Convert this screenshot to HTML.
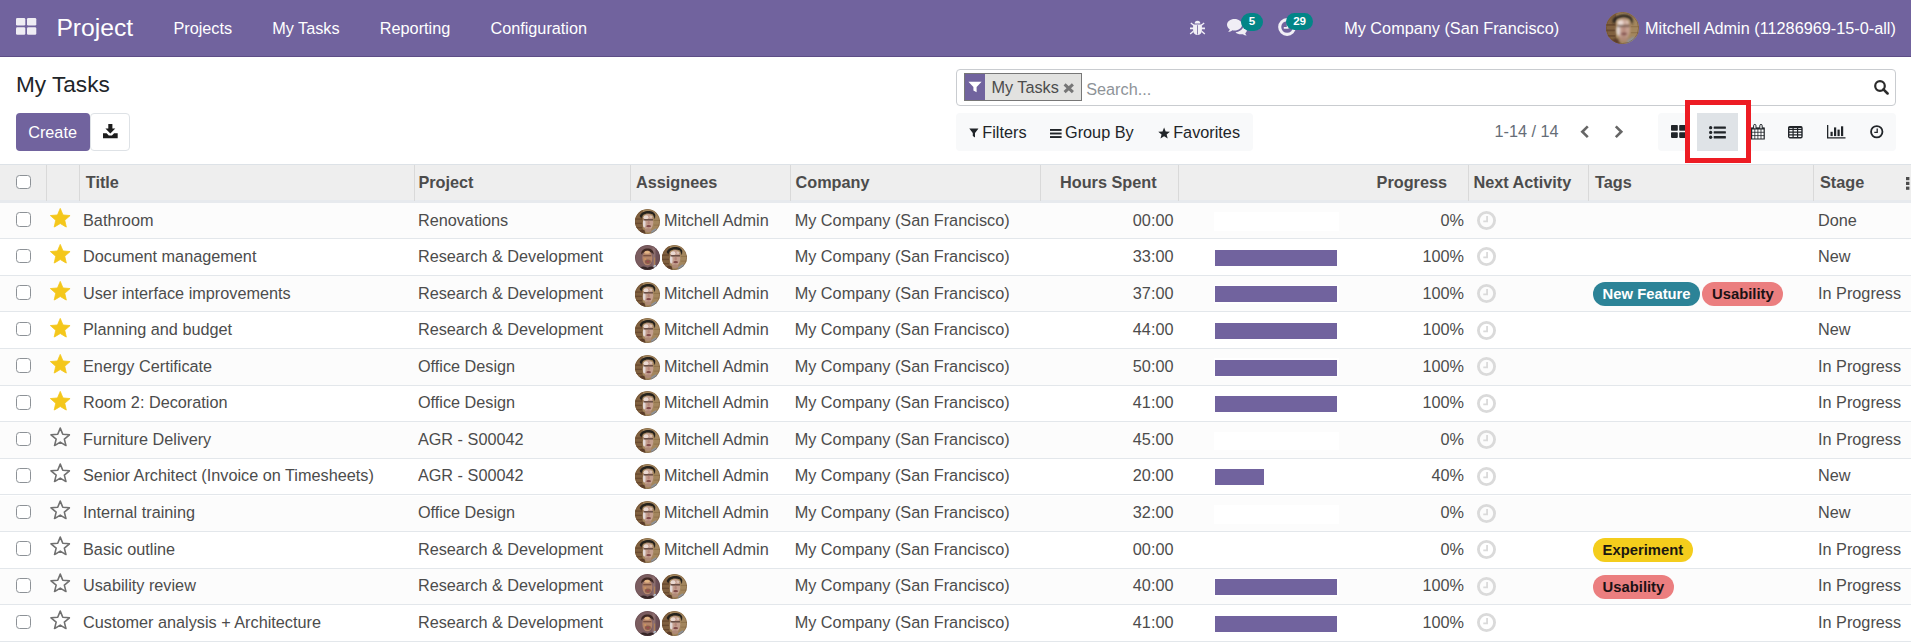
<!DOCTYPE html>
<html lang="en"><head><meta charset="utf-8"><title>Odoo - My Tasks</title>
<style>
*{box-sizing:border-box}
html,body{margin:0;padding:0}
body{width:1911px;height:644px;overflow:hidden;background:#fff;font-family:"Liberation Sans",Arial,sans-serif;font-size:16.25px;color:#4c4c4c;position:relative}
.t{position:absolute;white-space:nowrap;line-height:1}
svg{position:absolute;display:block;overflow:visible}
#nav{position:absolute;left:0;top:0;width:1911px;height:57px;background:#71639e;border-bottom:1px solid #5d4d86;color:#fff}
#nav .t{color:#fff}
.badge{position:absolute;background:#038587;color:#fff;font-weight:bold;font-size:11.6px;line-height:16.8px;height:17.8px;border-radius:9px;text-align:center}
#cp{position:absolute;left:0;top:57px;width:1911px;height:107px;background:#fff}
.btn-create{position:absolute;left:16.2px;top:113.2px;width:73.8px;height:37.6px;background:#71639e;border-radius:4px 0 0 4px;border-radius:4px;color:#fff}
.btn-dl{position:absolute;left:90.4px;top:113.2px;width:39.2px;height:37.6px;background:#fff;border:1px solid #dee2e6;border-radius:4px}
.search{position:absolute;left:956.2px;top:69.3px;width:939.4px;height:36.5px;border:1px solid #c9ccd0;border-radius:4px;background:#fff}
.facet{position:absolute;left:964px;top:73.2px;width:118px;height:27.6px;border:1px solid #777;background:#e2e2e0}
.facet i{position:absolute;left:0;top:0;width:19.6px;height:25.6px;background:#71639e;display:block}
.fbar{position:absolute;left:956.2px;top:113.1px;width:296.6px;height:37.7px;background:#f8f9fa;border-radius:4px}
.vbar{position:absolute;left:1658.2px;top:113.1px;width:237.4px;height:37.7px;background:#f8f9fa;border-radius:4px}
.vact{position:absolute;left:1697.1px;top:113.1px;width:41px;height:37.8px;background:#dfe3e7}
.redbox{position:absolute;left:1685px;top:100.2px;width:66px;height:62.7px;border:5px solid #ed1c24;background:#fff}
#thead{position:absolute;left:0;top:164px;width:1911px;height:39px;background:#eee;border-top:1.2px solid #dde2e7;border-bottom:3px solid #e7eaee;font-weight:bold}
#thead b{position:absolute;top:0;width:1px;height:35.5px;background:#d9d9d9;display:block}
#thead .t{top:9.2px}
.cb{position:absolute;left:16.3px;width:14.5px;height:14.5px;border:1px solid #8d9297;border-radius:3.5px;background:#fff;display:block}
.row{position:absolute;left:0;width:1911px;height:36.6px;border-bottom:1.1px solid #e3e7eb;background:#fff}
.rc{position:absolute;left:0;width:1911px;height:34px;line-height:34.7px}
.row.odd{background:#fcfcfc}
.row .cb{top:9.4px}
.row .c{position:absolute;top:0;white-space:nowrap}
.star{left:50.1px;top:5px;width:20.5px;height:19.5px}
.star.o{left:50.4px;top:4.3px}
.c-title{left:83px}
.c-proj{left:417.9px}
.c-ass{left:664px}
.c-comp{left:794.7px}
.c-hrs{right:737.5px}
.c-pct{right:447px}
.c-stage{left:1818px}
.av{top:6px;width:25px;height:25px}
.pb{position:absolute;left:1214px;top:9.4px;width:125px;height:18.7px;background:#fff;display:block}
.pf{position:absolute;left:1px;top:1.2px;height:16px;background:#71639e;display:block}
.clk{left:1477px;top:8.1px;width:19px;height:19px}
.tags{position:absolute;left:1593px;top:6px;height:24px;white-space:nowrap;display:block;line-height:24px}
.tag{display:inline-block;height:24px;line-height:24px;border-radius:12px;padding:0 9.6px;font-weight:bold;font-size:14.8px;margin-right:2.3px;vertical-align:top}
.t1{background:#2c8397;color:#fff}
.t2{background:#eb7e7f;color:#1b1215}
.t3{background:#f4cd1c;color:#1b1810}

</style></head>
<body>
<svg width="0" height="0" style="position:absolute">
<defs>
<symbol id="i-star" viewBox="0 0 20.5 19.5"><polygon points="10.25,0.38 13.04,6.94 20.14,7.57 14.77,12.25 16.36,19.19 10.25,15.53 4.14,19.19 5.73,12.25 0.36,7.57 7.46,6.94" fill="#f4c71b" stroke="#f4c71b" stroke-width="0.8" stroke-linejoin="round"/></symbol>
<symbol id="i-star-o" viewBox="0 0 20.5 19.5"><polygon points="10.25,1.08 12.78,7.30 19.48,7.78 14.34,12.11 15.95,18.63 10.25,15.08 4.55,18.63 6.16,12.11 1.02,7.78 7.72,7.30" fill="none" stroke="#707070" stroke-width="1.6" stroke-linejoin="round"/></symbol>
<symbol id="i-clk" viewBox="0 0 20 20"><circle cx="10" cy="10" r="8.5" fill="none" stroke="#dadada" stroke-width="3"/><path d="M10.6 5.2V10.9H6.6" fill="none" stroke="#dadada" stroke-width="1.9"/></symbol>
<symbol id="av-m" viewBox="0 0 32 32"><clipPath id="cm"><circle cx="16" cy="16" r="16"/></clipPath><filter id="bl" x="-20%" y="-20%" width="140%" height="140%"><feGaussianBlur stdDeviation="0.8"/></filter><g clip-path="url(#cm)"><rect width="32" height="32" fill="#a3865d"/><rect x="0" y="0" width="10" height="32" fill="#80603f"/><rect x="0" y="12" width="9" height="1.800" fill="#694a30"/><rect x="0" y="17.500" width="9" height="1.800" fill="#694a30"/><rect x="0" y="23" width="9" height="1.800" fill="#694a30"/><rect x="24" y="14" width="8" height="1.300" fill="#92744d"/><rect x="24" y="20" width="8" height="1.300" fill="#92744d"/><g filter="url(#bl)"><path d="M6 9C8 1 25 0 26 8L25.500 13L23 7C19 5 13 5 10 8L8 12Z" fill="#25211f"/><ellipse cx="16.800" cy="17" rx="6.600" ry="10.500" fill="#c49f8f"/><ellipse cx="14" cy="10.500" rx="3.200" ry="2.600" fill="#ead9d2"/><ellipse cx="20.500" cy="10" rx="2" ry="1.800" fill="#d9bfb3"/><ellipse cx="11.800" cy="18.500" rx="1.700" ry="5" fill="#e3d8d6"/><rect x="11" y="13" width="12" height="1.700" fill="#5a4239"/><ellipse cx="17.500" cy="17.500" rx="1.500" ry="2.400" fill="#b5867a"/><ellipse cx="17.500" cy="22" rx="3" ry="1.400" fill="#7f4a48"/><ellipse cx="17" cy="27" rx="4" ry="2.500" fill="#b08a78"/><path d="M20 33L21 28L26 25L31 26L33 33Z" fill="#8d939b"/><path d="M3 33C5 27 9 25 12 27L14 33Z" fill="#5b3d2c"/></g><circle cx="16" cy="16" r="15.600" fill="none" stroke="#6a4a30" stroke-width=".8" opacity=".6"/></g></symbol>
<symbol id="av-d" viewBox="0 0 32 32"><clipPath id="cd"><circle cx="16" cy="16" r="16"/></clipPath><g clip-path="url(#cd)"><rect width="32" height="32" fill="#7b5d60"/><rect x="22.500" y="0" width="3" height="32" fill="#8d6f70"/><rect x="24.500" y="16" width="1.300" height="10" fill="#b38452"/><rect x="27" y="0" width="5" height="32" fill="#6b4f56"/><g filter="url(#bl)"><path d="M8 12C7 2 25 2 23.800 12L21.800 10C19 8 13 8 10.200 10Z" fill="#3c2822"/><ellipse cx="15.800" cy="16.500" rx="6.400" ry="9.500" fill="#b4856a"/><ellipse cx="15.500" cy="9.500" rx="3.600" ry="1.800" fill="#e3b585"/><rect x="10.500" y="13" width="10.500" height="1.500" fill="#70493a"/><ellipse cx="13" cy="18" rx="1.300" ry="1" fill="#d99a55"/><ellipse cx="16.500" cy="21.500" rx="3.800" ry="2.800" fill="#8c5b4a"/><ellipse cx="16.500" cy="21.300" rx="1.600" ry=".7" fill="#a0444f"/><path d="M4 33C6 27 11 26.500 16 29C21 26.500 25 27 27 33Z" fill="#352628"/><ellipse cx="25.500" cy="27.500" rx="1.800" ry="2.200" fill="#b3bfcc"/></g><circle cx="16" cy="16" r="15.600" fill="none" stroke="#5a4045" stroke-width=".8" opacity=".6"/></g></symbol>
<symbol id="i-funnel" viewBox="0 0 14 14"><path d="M0.4 0.8H13.6L8.6 6.6V12.6L5.4 10.6V6.6Z"/></symbol>
</defs></svg>

<div id="nav">
<svg style="left:15.7px;top:18.2px;width:20.3px;height:16.8px" viewBox="0 0 20.3 16.8" fill="#efedf4"><rect x="0" y="0" width="9.3" height="7.6" rx="1.3"/><rect x="11" y="0" width="9.3" height="7.6" rx="1.3"/><rect x="0" y="9.2" width="9.3" height="7.6" rx="1.3"/><rect x="11" y="9.2" width="9.3" height="7.6" rx="1.3"/></svg>
<span class="t" style="left:56.4px;top:15.5px;font-size:24.7px">Project</span>
<span class="t" style="left:173.4px;top:20.1px">Projects</span>
<span class="t" style="left:272.2px;top:20.1px">My Tasks</span>
<span class="t" style="left:379.8px;top:20.1px">Reporting</span>
<span class="t" style="left:490.4px;top:20.1px">Configuration</span>
<svg style="left:1190.3px;top:20.1px;width:15px;height:15px" viewBox="0 0 15 15" fill="#f1eff6"><path d="M4.700 3.600a2.800 2.800 0 0 1 5.600 0z"/><path d="M3.100 4.500h8.800v6a4.400 4.500 0 0 1-8.800 0z"/><path d="M0 7.400h15v1.800H0zM.4 3.400l.9-1 2.800 2.400-.9 1zM14.600 3.400l-.9-1-2.800 2.400.9 1zM.6 14.600l-.9-1 3.200-2.900.9 1zM14.400 14.600l.9-1-3.200-2.900-.9 1z"/><rect x="7.100" y="5.200" width=".8" height="9.300" fill="#71639e"/></svg>
<svg style="left:1227.300px;top:19.200px;width:20px;height:16.400px" preserveAspectRatio="none" viewBox="0 0 20.2 15.8" fill="#f0eef5"><path d="M7.6 0C3.4 0 0 2.5 0 5.6c0 1.8 1.1 3.3 2.8 4.4-.3 1-.9 1.9-1.7 2.6 1.6-.1 3.100-.7 4.300-1.700.7.200 1.500.300 2.200.300 4.200 0 7.600-2.500 7.600-5.600S11.800 0 7.600 0z"/><path d="M16.600 6.300c0 3.400-3.500 6.100-8 6.400 1.200 1.300 3.200 2.100 5.400 2.100.700 0 1.400-.1 2-.200 1.100.800 2.500 1.200 3.900 1.200-.700-.600-1.200-1.300-1.500-2.100 1.100-.8 1.800-2 1.800-3.300 0-1.700-1.400-3.300-3.600-4.100z"/></svg>
<span class="badge" style="left:1241.2px;top:12.800px;width:21.600px">5</span>
<svg style="left:1278.200px;top:17.900px;width:18.200px;height:18px" viewBox="0 0 18.200 18"><circle cx="9.100" cy="9" r="7.400" fill="none" stroke="#f1eff6" stroke-width="3.100"/><path d="M9.700 4.500V9.800H5.800" fill="none" stroke="#f1eff6" stroke-width="1.800"/></svg>
<span class="badge" style="left:1286.200px;top:12.600px;width:26.800px">29</span>
<span class="t" style="left:1344.2px;top:20.4px">My Company (San Francisco)</span>
<svg style="left:1606px;top:12px;width:33px;height:32px" viewBox="0 0 32 32" preserveAspectRatio="none"><use href="#av-m"/></svg>
<span class="t" style="left:1645px;top:20.3px">Mitchell Admin (11286969-15-0-all)</span>
</div>

<div id="cp">
</div>
<span class="t" style="left:16px;top:74px;font-size:22.600px;color:#212529">My Tasks</span>
<div class="btn-create"><span class="t" style="left:12px;top:10.700px;color:#fff">Create</span></div>
<div class="btn-dl"><svg style="left:11.300px;top:9.800px;width:14.700px;height:14.200px" viewBox="0 0 14.700 14.200" fill="#1d1d1d"><path d="M5.300 0h4.100v4.600h2.900L7.350 9.600 2.400 4.600h2.900z"/><path d="M0 9.300h3.600l2.200 2.200h3.100l2.200-2.200h3.600v4.900H0z"/></svg></div>

<div class="search"></div>
<div class="facet"><i></i><svg style="left:3px;top:6.800px;width:14px;height:12.600px" viewBox="0 0 14 14" preserveAspectRatio="none" fill="#fff"><use href="#i-funnel"/></svg>
<span class="t" style="left:26.400px;top:4.600px;color:#4c4c4c">My Tasks</span>
<svg style="left:98.300px;top:8.800px;width:11.500px;height:10.500px" viewBox="0 0 11.500 10.500"><path d="M1.600 1.300L9.900 9.200M9.900 1.300L1.600 9.200" stroke="#767676" stroke-width="3" fill="none"/></svg>
</div>
<span class="t" style="left:1086.200px;top:81.100px;color:#8e9398">Search...</span>
<svg style="left:1873.500px;top:79.800px;width:14.700px;height:14.500px" viewBox="0 0 14.700 14.500"><circle cx="6" cy="6" r="4.800" fill="none" stroke="#2b2b2b" stroke-width="2.200"/><path d="M9.400 9.400L13.600 13.500" stroke="#2b2b2b" stroke-width="2.600" stroke-linecap="round"/></svg>

<div class="fbar"></div>
<svg style="left:968.600px;top:128.300px;width:9.800px;height:10.600px" viewBox="0 0 14 14" preserveAspectRatio="none" fill="#212529"><use href="#i-funnel"/></svg>
<span class="t" style="left:982.300px;top:123.800px;color:#212529">Filters</span>
<svg style="left:1050.200px;top:129px;width:11.600px;height:9px" viewBox="0 0 11.600 9" fill="#212529"><rect y="0" width="11.600" height="1.900"/><rect y="3.550" width="11.600" height="1.900"/><rect y="7.100" width="11.600" height="1.900"/></svg>
<span class="t" style="left:1065px;top:123.800px;color:#212529">Group By</span>
<svg style="left:1157.800px;top:126.900px;width:12.200px;height:12px" viewBox="0 0 21 20"><polygon points="10.50,0.40 13.20,7.28 20.58,7.72 14.87,12.42 16.73,19.58 10.50,15.60 4.27,19.58 6.13,12.42 0.42,7.72 7.80,7.28" fill="#212529"/></svg>
<span class="t" style="left:1173.200px;top:123.800px;color:#212529">Favorites</span>

<span class="t" style="left:1494.500px;top:123.300px;color:#666d77">1-14 / 14</span>
<svg style="left:1580.400px;top:125.400px;width:9.400px;height:13.500px" viewBox="0 0 9.400 13.500"><path d="M7.800 1.300L2.300 6.750L7.800 12.200" fill="none" stroke="#666" stroke-width="2.600"/></svg>
<svg style="left:1614.200px;top:125.400px;width:9.700px;height:13.500px" viewBox="0 0 9.700 13.500"><path d="M1.800 1.300L7.300 6.750L1.800 12.200" fill="none" stroke="#666" stroke-width="2.600"/></svg>

<div class="vbar"></div>
<svg style="left:1670.600px;top:125.400px;width:15px;height:12.900px" viewBox="0 0 15 12.900" fill="#212529"><rect width="6.800" height="5.700" rx=".8"/><rect x="8.200" width="6.800" height="5.700" rx=".8"/><rect y="7.200" width="6.800" height="5.700" rx=".8"/><rect x="8.200" y="7.200" width="6.800" height="5.700" rx=".8"/></svg>
<div class="redbox"></div>
<div class="vact"></div>
<svg style="left:1709.300px;top:125.800px;width:16.900px;height:12.900px" viewBox="0 0 16.900 12.900" fill="#212529"><circle cx="1.650" cy="1.650" r="1.650"/><circle cx="1.650" cy="6.450" r="1.650"/><circle cx="1.650" cy="11.250" r="1.650"/><rect x="4.700" y=".5" width="12.200" height="2.300" rx=".5"/><rect x="4.700" y="5.300" width="12.200" height="2.300" rx=".5"/><rect x="4.700" y="10.100" width="12.200" height="2.300" rx=".5"/></svg>
<svg style="left:1751px;top:124.100px;width:13.800px;height:15.600px" viewBox="0 0 13.800 15.600"><path d="M.6 4.200h12.600v10.800H.6z" fill="#fff" stroke="#212529" stroke-width="1.200"/><path d="M.6 4.600h12.600" stroke="#212529" stroke-width="1.800"/><path d="M.6 8.300h12.600M.6 11.600h12.600M3.800 5v10M6.900 5v10M10 5v10" stroke="#212529" stroke-width=".8" fill="none"/><path d="M2.600 4.300V1.800a1.200 1.400 0 0 1 2.400 0v2.500M8.800 4.300V1.800a1.200 1.400 0 0 1 2.400 0v2.500" stroke="#212529" stroke-width="1" fill="#f8f9fa"/></svg>
<svg style="left:1788.300px;top:125.900px;width:14.700px;height:12.400px" viewBox="0 0 14.700 12.400"><rect x=".7" y=".7" width="13.300" height="11" rx="1.200" fill="none" stroke="#212529" stroke-width="1.400"/><path d="M.7 3.500h13.300M.7 6.200h13.300M.7 8.900h13.300M5.100 2v9.700M9.600 2v9.700" stroke="#212529" stroke-width="1.200" fill="none"/><rect x=".7" y=".7" width="13.300" height="1.500" fill="#212529"/></svg>
<svg style="left:1826.900px;top:125.400px;width:18.500px;height:13.500px" viewBox="0 0 18.500 13.500" fill="#212529"><path d="M0 0h1.300v12.200h17.200v1.300H0z"/><rect x="3.500" y="6.800" width="2.200" height="4.300"/><rect x="7" y="2.400" width="2.200" height="8.700"/><rect x="10.500" y="4.600" width="2.200" height="6.500"/><rect x="14" y="1.300" width="2.200" height="9.800"/></svg>
<svg style="left:1869.700px;top:125.400px;width:13.500px;height:13.500px" viewBox="0 0 13.500 13.500"><circle cx="6.750" cy="6.750" r="5.700" fill="none" stroke="#212529" stroke-width="1.800"/><path d="M7.200 3.600V7.400H4.300" fill="none" stroke="#212529" stroke-width="1.300"/></svg>

<div id="thead">
<span class="cb" style="top:9.600px"></span>
<b style="left:46px"></b><b style="left:79px"></b><b style="left:413.800px"></b><b style="left:630px"></b><b style="left:790px"></b><b style="left:1040.200px"></b><b style="left:1178px"></b><b style="left:1468px"></b><b style="left:1588px"></b><b style="left:1813px"></b>
<span class="t" style="left:85.800px">Title</span>
<span class="t" style="left:418.400px">Project</span>
<span class="t" style="left:636px">Assignees</span>
<span class="t" style="left:795.500px">Company</span>
<span class="t" style="left:1060px">Hours Spent</span>
<span class="t" style="left:1376.600px">Progress</span>
<span class="t" style="left:1473.400px">Next Activity</span>
<span class="t" style="left:1595px">Tags</span>
<span class="t" style="left:1820px">Stage</span>
<svg style="left:1905.500px;top:12px;width:4px;height:13px" viewBox="0 0 4 13" fill="#4c4c4c"><rect width="3.400" height="3.200"/><rect y="4.800" width="3.400" height="3.200"/><rect y="9.600" width="3.400" height="3.200"/></svg>
</div>
<div id="list">
<div class="row odd" style="top:202.7px"><span class="cb"></span><svg class="star" viewBox="0 0 20.5 19.5"><use href="#i-star"/></svg><span class="pb"><span class="pf" style="width:0.0px"></span></span><svg class="clk" viewBox="0 0 20 20"><use href="#i-clk"/></svg><div class="rc" style="top:0.3px"><svg class="av" style="left:635px" viewBox="0 0 32 32"><use href="#av-m"/></svg><span class="c c-title">Bathroom</span><span class="c c-proj">Renovations</span><span class="c c-ass">Mitchell Admin</span><span class="c c-comp">My Company (San Francisco)</span><span class="c c-hrs">00:00</span><span class="c c-pct">0%</span><span class="c c-stage">Done</span></div></div>
<div class="row" style="top:239.3px"><span class="cb"></span><svg class="star" viewBox="0 0 20.5 19.5"><use href="#i-star"/></svg><span class="pb"><span class="pf" style="width:122.0px"></span></span><svg class="clk" viewBox="0 0 20 20"><use href="#i-clk"/></svg><div class="rc" style="top:-0.3px"><svg class="av" style="left:635px" viewBox="0 0 32 32"><use href="#av-d"/></svg><svg class="av" style="left:662px" viewBox="0 0 32 32"><use href="#av-m"/></svg><span class="c c-title">Document management</span><span class="c c-proj">Research &amp; Development</span><span class="c c-comp">My Company (San Francisco)</span><span class="c c-hrs">33:00</span><span class="c c-pct">100%</span><span class="c c-stage">New</span></div></div>
<div class="row odd" style="top:275.9px"><span class="cb"></span><svg class="star" viewBox="0 0 20.5 19.5"><use href="#i-star"/></svg><span class="pb"><span class="pf" style="width:122.0px"></span></span><svg class="clk" viewBox="0 0 20 20"><use href="#i-clk"/></svg><span class="tags"><span class="tag t1">New Feature</span><span class="tag t2">Usability</span></span><div class="rc" style="top:0.1px"><svg class="av" style="left:635px" viewBox="0 0 32 32"><use href="#av-m"/></svg><span class="c c-title">User interface improvements</span><span class="c c-proj">Research &amp; Development</span><span class="c c-ass">Mitchell Admin</span><span class="c c-comp">My Company (San Francisco)</span><span class="c c-hrs">37:00</span><span class="c c-pct">100%</span><span class="c c-stage">In Progress</span></div></div>
<div class="row" style="top:312.5px"><span class="cb"></span><svg class="star" viewBox="0 0 20.5 19.5"><use href="#i-star"/></svg><span class="pb"><span class="pf" style="width:122.0px"></span></span><svg class="clk" viewBox="0 0 20 20"><use href="#i-clk"/></svg><div class="rc" style="top:-0.5px"><svg class="av" style="left:635px" viewBox="0 0 32 32"><use href="#av-m"/></svg><span class="c c-title">Planning and budget</span><span class="c c-proj">Research &amp; Development</span><span class="c c-ass">Mitchell Admin</span><span class="c c-comp">My Company (San Francisco)</span><span class="c c-hrs">44:00</span><span class="c c-pct">100%</span><span class="c c-stage">New</span></div></div>
<div class="row odd" style="top:349.1px"><span class="cb"></span><svg class="star" viewBox="0 0 20.5 19.5"><use href="#i-star"/></svg><span class="pb"><span class="pf" style="width:122.0px"></span></span><svg class="clk" viewBox="0 0 20 20"><use href="#i-clk"/></svg><div class="rc" style="top:-0.1px"><svg class="av" style="left:635px" viewBox="0 0 32 32"><use href="#av-m"/></svg><span class="c c-title">Energy Certificate</span><span class="c c-proj">Office Design</span><span class="c c-ass">Mitchell Admin</span><span class="c c-comp">My Company (San Francisco)</span><span class="c c-hrs">50:00</span><span class="c c-pct">100%</span><span class="c c-stage">In Progress</span></div></div>
<div class="row" style="top:385.7px"><span class="cb"></span><svg class="star" viewBox="0 0 20.5 19.5"><use href="#i-star"/></svg><span class="pb"><span class="pf" style="width:122.0px"></span></span><svg class="clk" viewBox="0 0 20 20"><use href="#i-clk"/></svg><div class="rc" style="top:-0.7px"><svg class="av" style="left:635px" viewBox="0 0 32 32"><use href="#av-m"/></svg><span class="c c-title">Room 2: Decoration</span><span class="c c-proj">Office Design</span><span class="c c-ass">Mitchell Admin</span><span class="c c-comp">My Company (San Francisco)</span><span class="c c-hrs">41:00</span><span class="c c-pct">100%</span><span class="c c-stage">In Progress</span></div></div>
<div class="row odd" style="top:422.3px"><span class="cb"></span><svg class="star o" viewBox="0 0 20.5 19.5"><use href="#i-star-o"/></svg><span class="pb"><span class="pf" style="width:0.0px"></span></span><svg class="clk" viewBox="0 0 20 20"><use href="#i-clk"/></svg><div class="rc" style="top:-0.3px"><svg class="av" style="left:635px" viewBox="0 0 32 32"><use href="#av-m"/></svg><span class="c c-title">Furniture Delivery</span><span class="c c-proj">AGR - S00042</span><span class="c c-ass">Mitchell Admin</span><span class="c c-comp">My Company (San Francisco)</span><span class="c c-hrs">45:00</span><span class="c c-pct">0%</span><span class="c c-stage">In Progress</span></div></div>
<div class="row" style="top:458.9px"><span class="cb"></span><svg class="star o" viewBox="0 0 20.5 19.5"><use href="#i-star-o"/></svg><span class="pb"><span class="pf" style="width:48.8px"></span></span><svg class="clk" viewBox="0 0 20 20"><use href="#i-clk"/></svg><div class="rc" style="top:-0.9px"><svg class="av" style="left:635px" viewBox="0 0 32 32"><use href="#av-m"/></svg><span class="c c-title">Senior Architect (Invoice on Timesheets)</span><span class="c c-proj">AGR - S00042</span><span class="c c-ass">Mitchell Admin</span><span class="c c-comp">My Company (San Francisco)</span><span class="c c-hrs">20:00</span><span class="c c-pct">40%</span><span class="c c-stage">New</span></div></div>
<div class="row odd" style="top:495.5px"><span class="cb"></span><svg class="star o" viewBox="0 0 20.5 19.5"><use href="#i-star-o"/></svg><span class="pb"><span class="pf" style="width:0.0px"></span></span><svg class="clk" viewBox="0 0 20 20"><use href="#i-clk"/></svg><div class="rc" style="top:-0.5px"><svg class="av" style="left:635px" viewBox="0 0 32 32"><use href="#av-m"/></svg><span class="c c-title">Internal training</span><span class="c c-proj">Office Design</span><span class="c c-ass">Mitchell Admin</span><span class="c c-comp">My Company (San Francisco)</span><span class="c c-hrs">32:00</span><span class="c c-pct">0%</span><span class="c c-stage">New</span></div></div>
<div class="row" style="top:532.1px"><span class="cb"></span><svg class="star o" viewBox="0 0 20.5 19.5"><use href="#i-star-o"/></svg><span class="pb"><span class="pf" style="width:0.0px"></span></span><svg class="clk" viewBox="0 0 20 20"><use href="#i-clk"/></svg><span class="tags"><span class="tag t3">Experiment</span></span><div class="rc" style="top:-0.1px"><svg class="av" style="left:635px" viewBox="0 0 32 32"><use href="#av-m"/></svg><span class="c c-title">Basic outline</span><span class="c c-proj">Research &amp; Development</span><span class="c c-ass">Mitchell Admin</span><span class="c c-comp">My Company (San Francisco)</span><span class="c c-hrs">00:00</span><span class="c c-pct">0%</span><span class="c c-stage">In Progress</span></div></div>
<div class="row odd" style="top:568.7px"><span class="cb"></span><svg class="star o" viewBox="0 0 20.5 19.5"><use href="#i-star-o"/></svg><span class="pb"><span class="pf" style="width:122.0px"></span></span><svg class="clk" viewBox="0 0 20 20"><use href="#i-clk"/></svg><span class="tags"><span class="tag t2">Usability</span></span><div class="rc" style="top:-0.7px"><svg class="av" style="left:635px" viewBox="0 0 32 32"><use href="#av-d"/></svg><svg class="av" style="left:662px" viewBox="0 0 32 32"><use href="#av-m"/></svg><span class="c c-title">Usability review</span><span class="c c-proj">Research &amp; Development</span><span class="c c-comp">My Company (San Francisco)</span><span class="c c-hrs">40:00</span><span class="c c-pct">100%</span><span class="c c-stage">In Progress</span></div></div>
<div class="row" style="top:605.3px"><span class="cb"></span><svg class="star o" viewBox="0 0 20.5 19.5"><use href="#i-star-o"/></svg><span class="pb"><span class="pf" style="width:122.0px"></span></span><svg class="clk" viewBox="0 0 20 20"><use href="#i-clk"/></svg><div class="rc" style="top:-0.3px"><svg class="av" style="left:635px" viewBox="0 0 32 32"><use href="#av-d"/></svg><svg class="av" style="left:662px" viewBox="0 0 32 32"><use href="#av-m"/></svg><span class="c c-title">Customer analysis + Architecture</span><span class="c c-proj">Research &amp; Development</span><span class="c c-comp">My Company (San Francisco)</span><span class="c c-hrs">41:00</span><span class="c c-pct">100%</span><span class="c c-stage">In Progress</span></div></div>
</div>
</body></html>
